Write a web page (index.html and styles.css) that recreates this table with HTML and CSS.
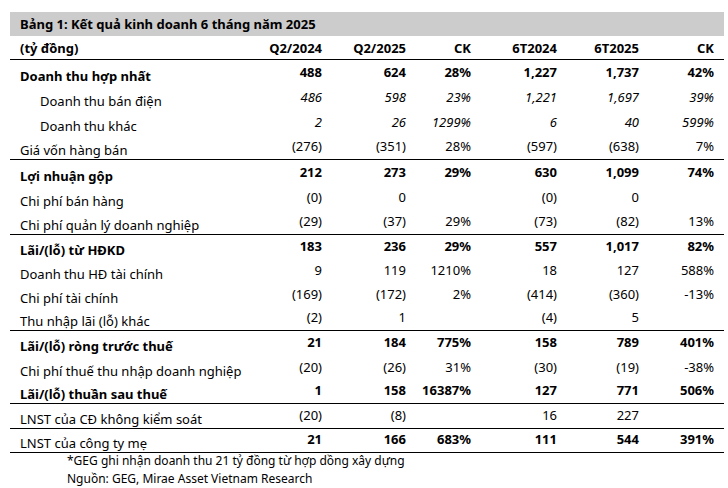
FILE: index.html
```html
<!DOCTYPE html>
<html lang="vi">
<head>
<meta charset="utf-8">
<link rel="stylesheet" href="styles.css">
</head>
<body>
<div class="table">
  <div class="title">Bảng 1: Kết quả kinh doanh 6 tháng năm 2025</div>
  <div class="row head line">
    <div class="lbl">(tỷ đồng)</div><div class="num">Q2/2024</div><div class="num">Q2/2025</div><div class="num">CK</div><div class="num">6T2024</div><div class="num">6T2025</div><div class="num">CK</div>
  </div>
  <div class="row tall bold">
    <div class="lbl">Doanh thu hợp nhất</div><div class="num">488</div><div class="num">624</div><div class="num">28%</div><div class="num">1,227</div><div class="num">1,737</div><div class="num">42%</div>
  </div>
  <div class="row tall ital">
    <div class="lbl ind">Doanh thu bán điện</div><div class="num">486</div><div class="num">598</div><div class="num">23%</div><div class="num">1,221</div><div class="num">1,697</div><div class="num">39%</div>
  </div>
  <div class="row tall ital">
    <div class="lbl ind">Doanh thu khác</div><div class="num">2</div><div class="num">26</div><div class="num">1299%</div><div class="num">6</div><div class="num">40</div><div class="num">599%</div>
  </div>
  <div class="row tall line">
    <div class="lbl">Giá vốn hàng bán</div><div class="num">(276)</div><div class="num">(351)</div><div class="num">28%</div><div class="num">(597)</div><div class="num">(638)</div><div class="num">7%</div>
  </div>
  <div class="row tall bold">
    <div class="lbl">Lợi nhuận gộp</div><div class="num">212</div><div class="num">273</div><div class="num">29%</div><div class="num">630</div><div class="num">1,099</div><div class="num">74%</div>
  </div>
  <div class="row tall">
    <div class="lbl">Chi phí bán hàng</div><div class="num">(0)</div><div class="num">0</div><div class="num"></div><div class="num">(0)</div><div class="num">0</div><div class="num"></div>
  </div>
  <div class="row tall line">
    <div class="lbl">Chi phí quản lý doanh nghiệp</div><div class="num">(29)</div><div class="num">(37)</div><div class="num">29%</div><div class="num">(73)</div><div class="num">(82)</div><div class="num">13%</div>
  </div>
  <div class="row bold">
    <div class="lbl">Lãi/(lỗ) từ HĐKD</div><div class="num">183</div><div class="num">236</div><div class="num">29%</div><div class="num">557</div><div class="num">1,017</div><div class="num">82%</div>
  </div>
  <div class="row">
    <div class="lbl">Doanh thu HĐ tài chính</div><div class="num">9</div><div class="num">119</div><div class="num">1210%</div><div class="num">18</div><div class="num">127</div><div class="num">588%</div>
  </div>
  <div class="row">
    <div class="lbl">Chi phí tài chính</div><div class="num">(169)</div><div class="num">(172)</div><div class="num">2%</div><div class="num">(414)</div><div class="num">(360)</div><div class="num">-13%</div>
  </div>
  <div class="row line">
    <div class="lbl">Thu nhập lãi (lỗ) khác</div><div class="num">(2)</div><div class="num">1</div><div class="num"></div><div class="num">(4)</div><div class="num">5</div><div class="num"></div>
  </div>
  <div class="row bold">
    <div class="lbl">Lãi/(lỗ) ròng trước thuế</div><div class="num">21</div><div class="num">184</div><div class="num">775%</div><div class="num">158</div><div class="num">789</div><div class="num">401%</div>
  </div>
  <div class="row tall">
    <div class="lbl">Chi phí thuế thu nhập doanh nghiệp</div><div class="num">(20)</div><div class="num">(26)</div><div class="num">31%</div><div class="num">(30)</div><div class="num">(19)</div><div class="num">-38%</div>
  </div>
  <div class="row bold line">
    <div class="lbl">Lãi/(lỗ) thuần sau thuế</div><div class="num">1</div><div class="num">158</div><div class="num">16387%</div><div class="num">127</div><div class="num">771</div><div class="num">506%</div>
  </div>
  <div class="row tall line">
    <div class="lbl">LNST của CĐ không kiểm soát</div><div class="num">(20)</div><div class="num">(8)</div><div class="num"></div><div class="num">16</div><div class="num">227</div><div class="num"></div>
  </div>
  <div class="row line">
    <div class="lbl">LNST của công ty mẹ</div><div class="num b">21</div><div class="num b">166</div><div class="num b">683%</div><div class="num b">111</div><div class="num b">544</div><div class="num b">391%</div>
  </div>
  <div class="notes">
    <div class="note">*GEG ghi nhận doanh thu 21 tỷ đồng từ hợp dồng xây dựng</div>
    <div class="note">Nguồn: GEG, Mirae Asset Vietnam Research</div>
  </div>
</div>
</body>
</html>
```

FILE: styles.css
```css
html, body {
  margin: 0;
  padding: 0;
  background: #ffffff;
}
body {
  padding: 12px 4px 0 10px;
  font-family: "Noto Sans", "Open Sans", sans-serif;
  font-size: 13px;
  color: #000000;
}
.table {
  width: 714px;
}
.title {
  background: #cccccc;
  height: 24px;
  line-height: 24px;
  padding-left: 10px;
  font-weight: 700;
}
.row {
  display: grid;
  grid-template-columns: 1fr 84px 84px 65px 86px 82px 75px;
  align-items: end;
  height: 24px;
  box-sizing: border-box;
}
.row.tall {
  height: 25px;
}
.row.head {
  height: 24px;
  align-items: center;
  font-weight: 700;
}
.row.line {
  border-bottom: 1px solid #000000;
}
.lbl {
  padding-left: 10px;
  line-height: 18px;
  padding-bottom: 0;
  white-space: nowrap;
}
.head .lbl, .head .num {
  padding-bottom: 0;
}
.lbl.ind {
  padding-left: 30px;
}
.num {
  text-align: right;
  padding-right: 10px;
  line-height: 18px;
  padding-bottom: 4px;
  white-space: nowrap;
}
.bold {
  font-weight: 700;
}
.ital .num {
  font-style: italic;
}
.num.b {
  font-weight: 700;
}
.notes {
  padding-left: 57px;
  margin-top: -1px;
  font-size: 12px;
}
.note {
  line-height: 18px;
}
```
